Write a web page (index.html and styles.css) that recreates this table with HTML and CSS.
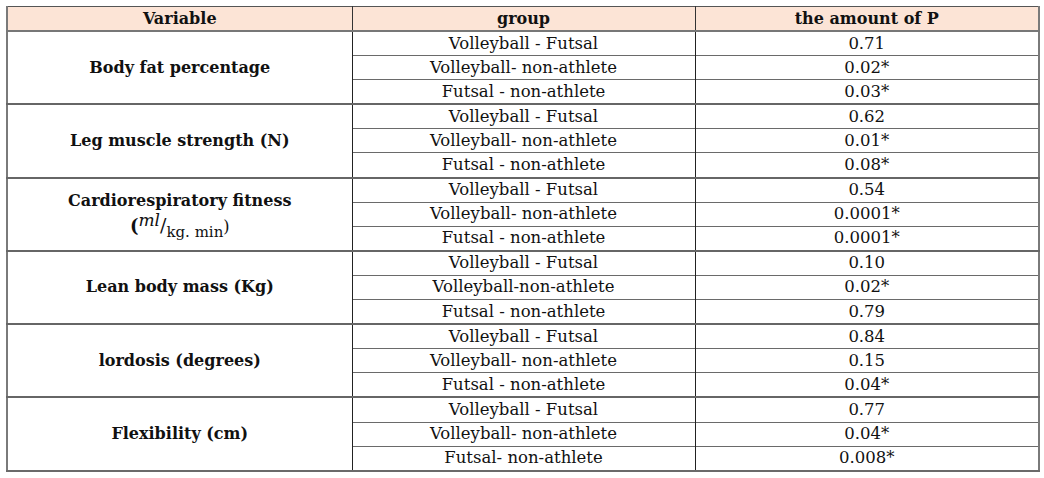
FILE: index.html
```html
<!DOCTYPE html>
<html>
<head>
<meta charset="utf-8">
<link rel="stylesheet" href="styles.css">
</head>
<body>
<table class="results">
  <colgroup>
    <col class="c1"><col class="c2"><col class="c3">
  </colgroup>
  <thead>
    <tr><th>Variable</th><th>group</th><th>the amount of P</th></tr>
  </thead>
  <tbody>
    <tr class="first"><td class="var" rowspan="3">Body fat percentage</td><td>Volleyball - Futsal</td><td>0.71</td></tr>
    <tr><td>Volleyball- non-athlete</td><td>0.02*</td></tr>
    <tr><td>Futsal - non-athlete</td><td>0.03*</td></tr>

    <tr class="first"><td class="var" rowspan="3">Leg muscle strength (N)</td><td>Volleyball - Futsal</td><td>0.62</td></tr>
    <tr><td>Volleyball- non-athlete</td><td>0.01*</td></tr>
    <tr><td>Futsal - non-athlete</td><td>0.08*</td></tr>

    <tr class="first"><td class="var" rowspan="3">Cardiorespiratory fitness<br><span class="unit"><b>(</b><sup><i>ml</i></sup><span class="slash">/</span><sub>kg. min</sub>)</span></td><td>Volleyball - Futsal</td><td>0.54</td></tr>
    <tr><td>Volleyball- non-athlete</td><td>0.0001*</td></tr>
    <tr><td>Futsal - non-athlete</td><td>0.0001*</td></tr>

    <tr class="first"><td class="var" rowspan="3">Lean body mass (Kg)</td><td>Volleyball - Futsal</td><td>0.10</td></tr>
    <tr><td>Volleyball-non-athlete</td><td>0.02*</td></tr>
    <tr><td>Futsal - non-athlete</td><td>0.79</td></tr>

    <tr class="first"><td class="var" rowspan="3">lordosis (degrees)</td><td>Volleyball - Futsal</td><td>0.84</td></tr>
    <tr><td>Volleyball- non-athlete</td><td>0.15</td></tr>
    <tr><td>Futsal - non-athlete</td><td>0.04*</td></tr>

    <tr class="first"><td class="var" rowspan="3">Flexibility (cm)</td><td>Volleyball - Futsal</td><td>0.77</td></tr>
    <tr><td>Volleyball- non-athlete</td><td>0.04*</td></tr>
    <tr><td>Futsal- non-athlete</td><td>0.008*</td></tr>
  </tbody>
</table>
</body>
</html>
```
FILE: styles.css
```css
html, body {
  margin: 0;
  padding: 0;
  background: #ffffff;
}
body {
  padding: 6px 0 0 6px;
  font-family: "DejaVu Serif", "Liberation Serif", serif;
  color: #111;
}
.results {
  border-collapse: collapse;
  table-layout: fixed;
  width: 1032px;
  font-size: 16.5px;
  border-left: 2px solid #7a7a7a;
  border-right: 2px solid #7a7a7a;
  border-top: 1px solid #555;
  border-bottom: 2px solid #6a6a6a;
}
.c1 { width: 345px; }
.c2 { width: 343px; }
.c3 { width: 344px; }
.results th {
  background: #fce4d6;
  font-weight: bold;
  font-size: 16px;
  height: 23px;
  padding: 0;
  line-height: 23px;
  border-bottom: 2px solid #777;
  border-left: 1px solid #333;
}
.results td {
  text-align: center;
  height: 23.1px;
  padding: 0;
  line-height: 20px;
  border-top: 1px solid #6a6a6a;
  border-left: 1px solid #222;
}
.results tr.first td {
  border-top: 2px solid #666;
}
.results td.var {
  font-weight: bold;
  font-size: 16px;
  line-height: 24px;
}
.unit {
  font-weight: normal;
}
.unit b {
  font-size: 18px;
}
.unit sup {
  font-size: 17px;
  vertical-align: 6px;
  line-height: 0;
}
.unit .slash {
  font-size: 19px;
}
.unit sub {
  font-size: 15px;
  vertical-align: -5px;
  line-height: 0;
}
```
